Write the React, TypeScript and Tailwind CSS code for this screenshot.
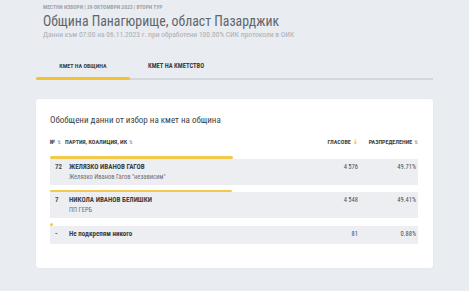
import React from 'react';

type Row = { no: string; name: string; sub?: string; votes: string; pct: number };

const rows: Row[] = [
  { no: '72', name: 'ЖЕЛЯЗКО ИВАНОВ ГАГОВ', sub: 'Желязко Иванов Гагов "независим"', votes: '4 576', pct: 49.71 },
  { no: '7', name: 'НИКОЛА ИВАНОВ БЕЛИШКИ', sub: 'ПП ГЕРБ', votes: '4 548', pct: 49.41 },
  { no: '-', name: 'Не подкрепям никого', votes: '81', pct: 0.88 },
];

const SortIcon = ({ active }: { active?: boolean }) => (
  <span className={active ? 'text-[#f2c230] text-[7px] leading-none' : 'text-[#9aa3ad] text-[5px] leading-none'}>
    {active ? '↓' : '⇅'}
  </span>
);

const App: React.FC = () => {
  return (
    <div className="h-[291px] w-[469px] overflow-hidden bg-[#e9ecf0] font-['Roboto_Condensed','Liberation_Sans_Narrow','Arial_Narrow','DejaVu_Sans_Condensed',Roboto,sans-serif] text-[#333]">
      {/* Header */}
      <div className="px-[43px] pt-[3px]">
        <div className="text-[5.5px] font-bold uppercase leading-[8px] text-[#a0a6ad]">
          Местни избори | 29 октомври 2023 | втори тур
        </div>
        <h1 className="mt-[1px] text-[13.8px] leading-[18px] text-[#60666d]">
          Община Панагюрище, област Пазарджик
        </h1>
        <div className="text-[7.5px] leading-[10px] text-[#a9aeb4]">
          Данни към 07:00 на 06.11.2023 г. при обработени 100.00% СИК протоколи в ОИК
        </div>
      </div>

      {/* Tabs */}
      <div className="mx-[36px] mt-[22px]">
        <div className="flex">
          <div className="flex w-[94px] flex-col">
            <div className="pb-[7px] text-center text-[6px] font-bold uppercase leading-[8px] text-[#3a3f45]">
              Кмет на община
            </div>
            <div className="h-[3px] rounded-full bg-[#f2c230]" />
          </div>
          <div className="flex flex-1 flex-col">
            <div className="pb-[7px] pl-[18px] text-[6.5px] font-bold uppercase leading-[8px] text-[#3a3f45]">
              Кмет на кметство
            </div>
            <div className="mt-[0.5px] h-[2px] bg-[#d3d7dc]" />
          </div>
        </div>
      </div>

      {/* Card */}
      <div className="mx-[36px] mt-[19px] h-[169px] rounded-[3px] bg-white px-[14px] pt-[14px] shadow-[0_0_2px_rgba(0,0,0,0.06)]">
        <h2 className="text-[9px] leading-[14px] text-[#3a3f45]">Обобщени данни от избор на кмет на община</h2>

        <div className="mt-[11px] mr-[1px] flex items-center text-[6px] font-bold uppercase leading-[8px] text-[#3a3f45]">
          <div className="flex flex-1 items-center gap-[2px]">
            <span>№</span>
            <SortIcon />
            <span className="ml-[2px]">Партия, коалиция, ИК</span>
            <SortIcon />
          </div>
          <div className="flex w-[50px] items-center justify-end gap-[2px]">
            <span>Гласове</span>
            <SortIcon active />
          </div>
          <div className="flex w-[60px] items-center justify-end gap-[2px]">
            <span>Разпределение</span>
            <SortIcon />
          </div>
        </div>

        <div className="mt-[10px] mr-[1px] flex flex-col gap-[5px]">
          {rows.map((r) => (
            <div key={r.no}>
              <div className="h-[2.5px] rounded-full bg-[#f2c94c]" style={{ width: `${Math.max(r.pct, 0.6)}%` }} />
              <div className={`flex bg-[#eceef1] pl-[5px] pr-[2px] ${r.sub ? 'h-[26px] pt-[4px]' : 'h-[18px] items-center'}`}>
                <div className="w-[14px] text-[7px] font-bold leading-[9px] text-[#4a5057]">{r.no}</div>
                <div className="flex-1">
                  <div className={`text-[7px] font-bold leading-[9px] text-[#3a3f45] ${r.sub ? 'uppercase' : ''}`}>{r.name}</div>
                  {r.sub && <div className="mt-[1px] text-[6.5px] leading-[9px] text-[#6b7178]">{r.sub}</div>}
                </div>
                <div className="w-[50px] text-right text-[6.5px] leading-[9px] text-[#4a5057]">{r.votes}</div>
                <div className="w-[58px] text-right text-[6.5px] leading-[9px] text-[#4a5057]">{r.pct.toFixed(2)}%</div>
              </div>
            </div>
          ))}
        </div>
      </div>
    </div>
  );
};

export default App;
